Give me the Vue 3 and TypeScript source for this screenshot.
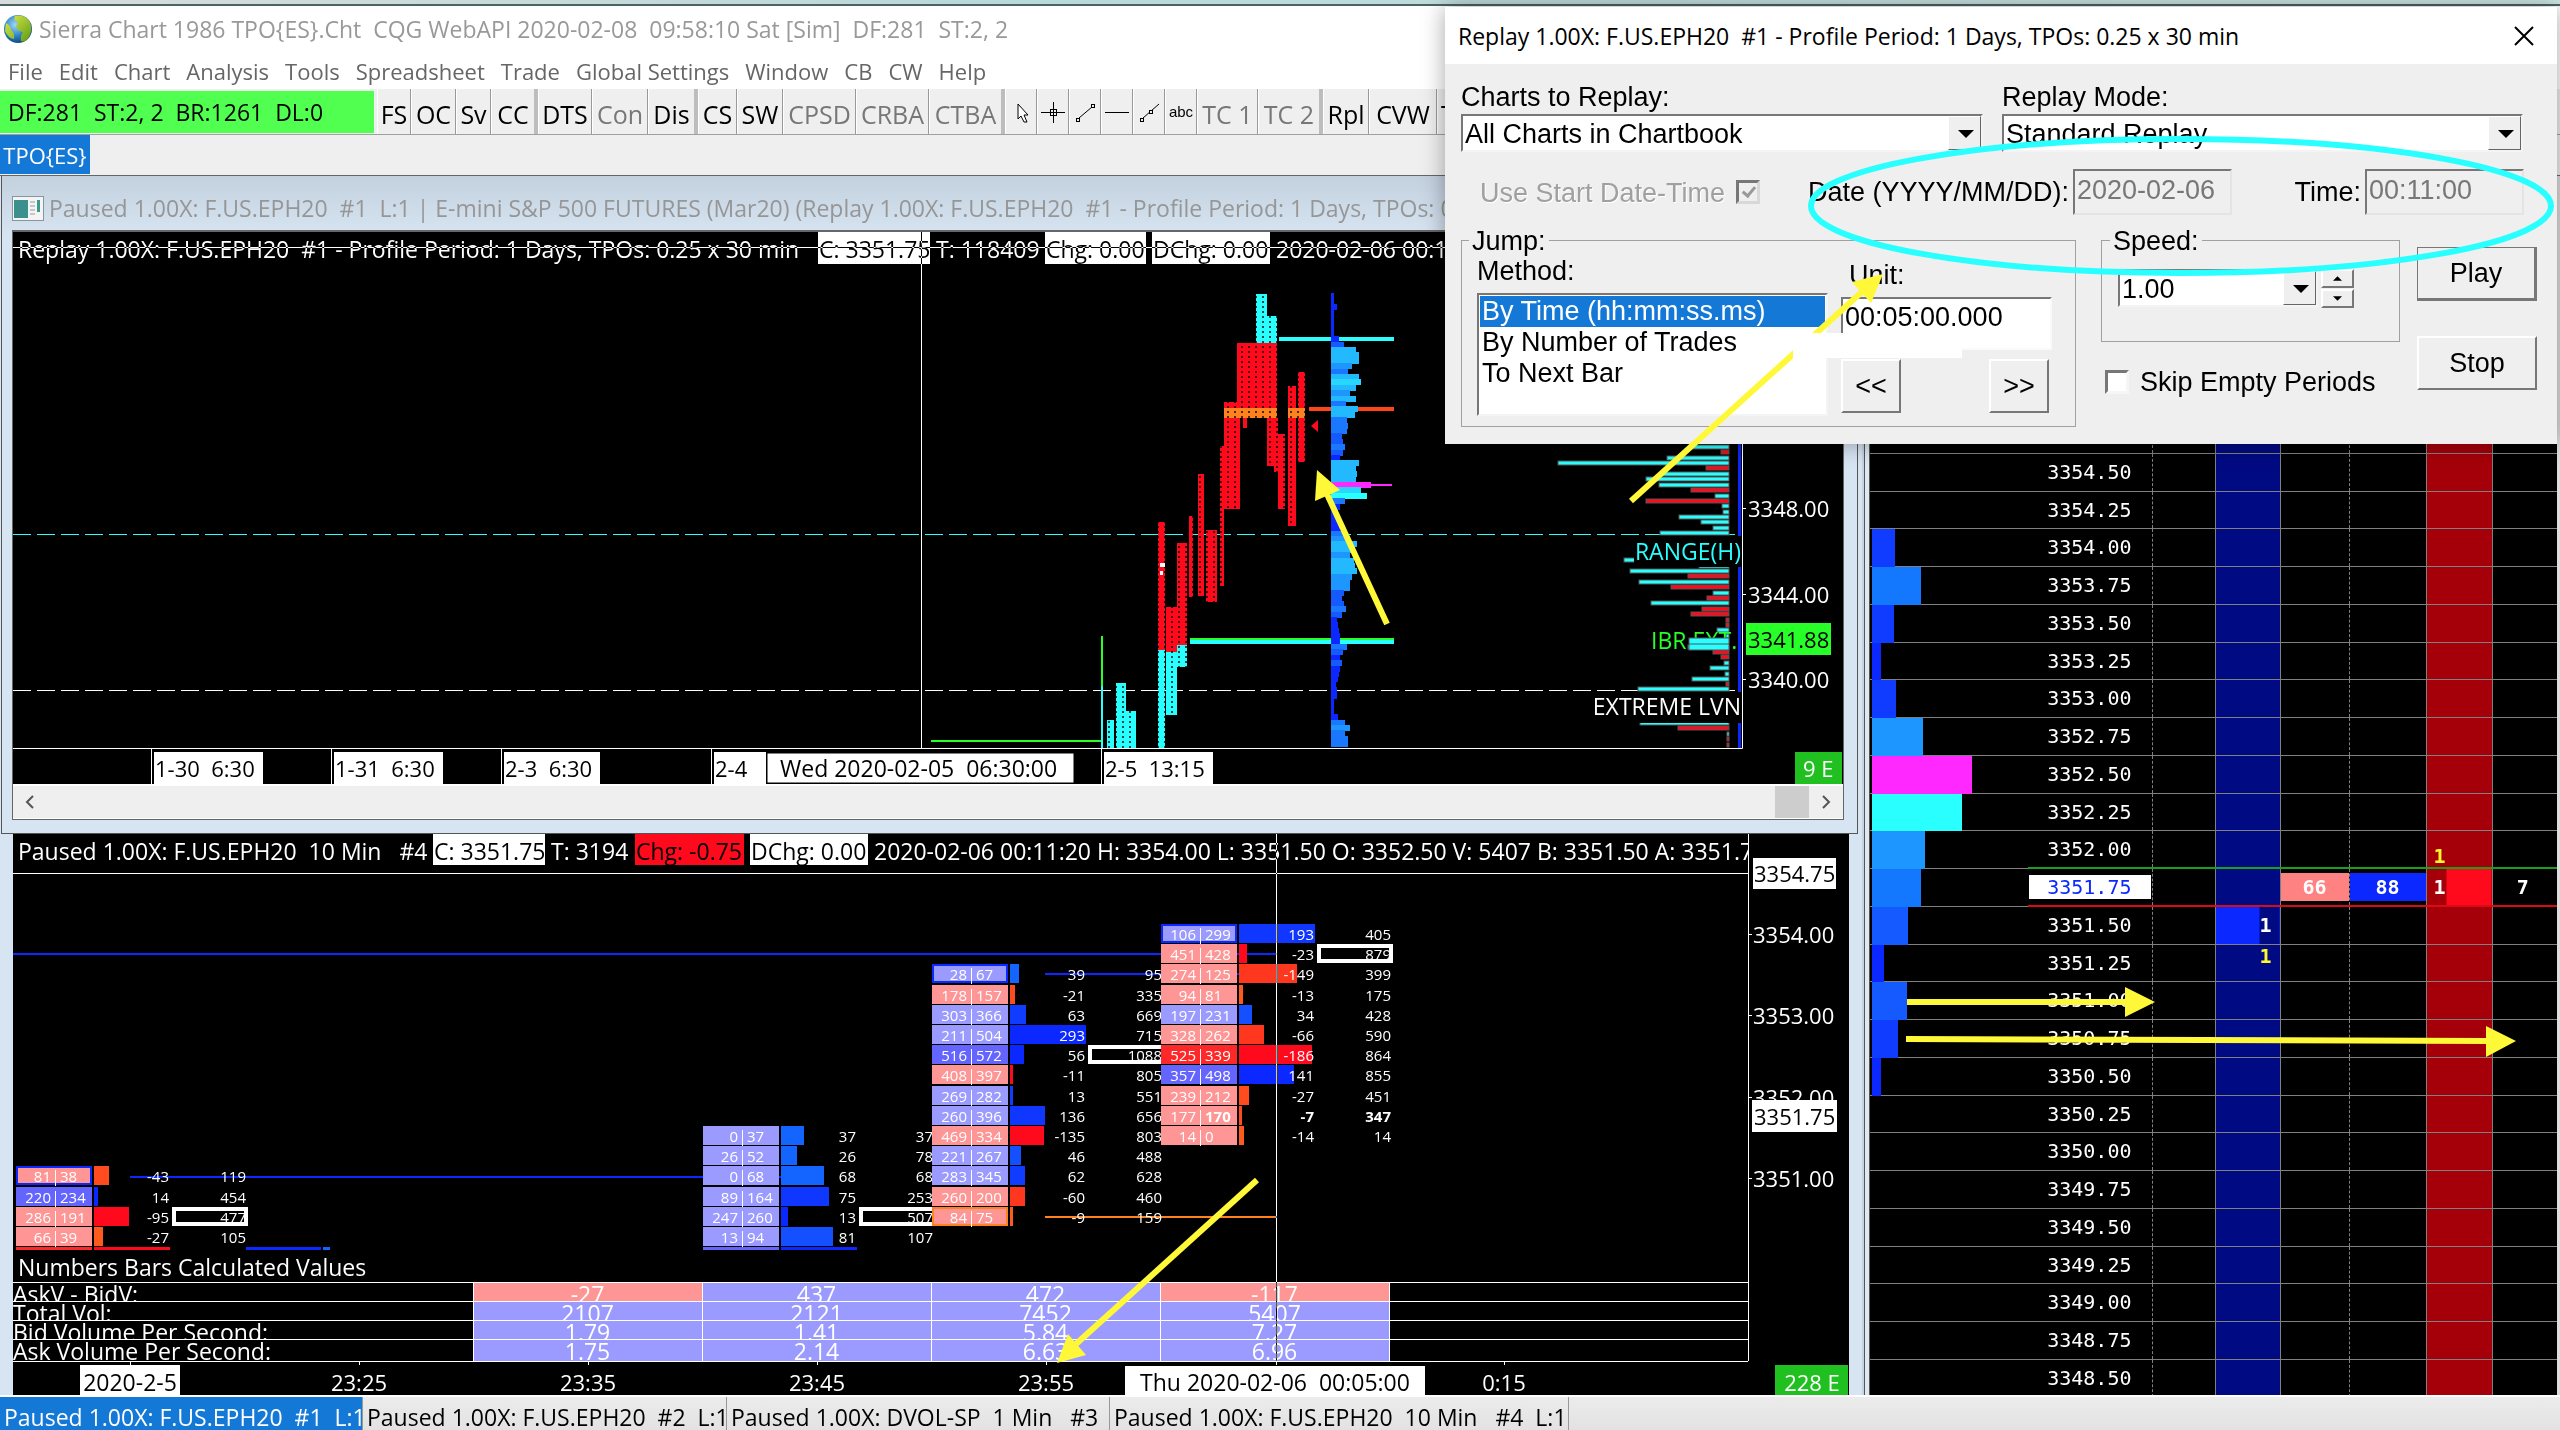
<script setup lang="ts">
interface Tool { label?: string; icon?: string; width: number; dim?: boolean; end?: boolean }
interface Cell { bid: number; ask: number; tone: string; bar: number; fill: string; delta: number; vol: number; edge?: string; poc?: boolean; bold?: boolean }
interface Bar { x: number; row: number; cells: Cell[] }

const appTitle = 'Sierra Chart 1986 TPO{ES}.Cht  CQG WebAPI 2020-02-08  09:58:10 Sat [Sim]  DF:281  ST:2, 2'
const feedStatus = 'DF:281  ST:2, 2  BR:1261  DL:0'
const replayTitle = 'Replay 1.00X: F.US.EPH20  #1 - Profile Period: 1 Days, TPOs: 0.25 x 30 min'
const windowTitle = `Paused 1.00X: F.US.EPH20  #1  L:1 | E-mini S&P 500 FUTURES (Mar20) (${replayTitle})`
const numbersTitle = 'Paused 1.00X: F.US.EPH20  10 Min   #4'
const upperCursor = 'Wed 2020-02-05  06:30:00'
const lowerCursor = 'Thu 2020-02-06  00:05:00'

const menus = ['File', 'Edit', 'Chart', 'Analysis', 'Tools', 'Spreadsheet', 'Trade', 'Global Settings', 'Window', 'CB', 'CW', 'Help']

const tools: Tool[] = [
  { label: 'FS', width: 34 }, { label: 'OC', width: 45 }, { label: 'Sv', width: 35 }, { label: 'CC', width: 47, end: true },
  { label: 'DTS', width: 54 }, { label: 'Con', width: 56, dim: true }, { label: 'Dis', width: 50, end: true },
  { label: 'CS', width: 39 }, { label: 'SW', width: 46 }, { label: 'CPSD', width: 73, dim: true },
  { label: 'CRBA', width: 73, dim: true }, { label: 'CTBA', width: 76, dim: true, end: true },
  { icon: 'pointer', width: 32 }, { icon: 'cross', width: 32 }, { icon: 'line', width: 32 }, { icon: 'horizontal', width: 32 },
  { icon: 'ray', width: 32 }, { icon: 'text', width: 32 }, { label: 'TC 1', width: 61, dim: true },
  { label: 'TC 2', width: 65, dim: true, end: true }, { label: 'Rpl', width: 46 }, { label: 'CVW', width: 68 }, { label: 'T', width: 22 },
]

const CYAN = '#2affff'
const RED = '#ff0a1c'

// Market profile letters: x, top, width, bottom, kind
const tpo: [number, number, number, number, string][] = [
  [1256, 294, 11, 347, 'c'], [1267, 316, 10, 347, 'c'], [1237, 343, 19, 416, 'r'], [1243, 416, 4, 428, 'r'],
  [1256, 343, 21, 416, 'r'], [1267, 418, 7, 466, 'r'], [1274, 418, 4, 472, 'r'], [1224, 402, 16, 509, 'r'],
  [1220, 446, 4, 586, 'r'], [1278, 434, 7, 509, 'r'], [1288, 386, 8, 526, 'r'], [1298, 372, 7, 462, 'r'],
  [1198, 474, 6, 596, 'r'], [1189, 516, 4, 597, 'r'], [1206, 530, 11, 602, 'r'], [1177, 543, 10, 645, 'r'],
  [1166, 607, 11, 655, 'r'], [1158, 522, 7, 650, 'r'], [1158, 650, 7, 748, 'c'], [1166, 652, 11, 715, 'c'],
  [1177, 645, 10, 667, 'c'], [1107, 720, 7, 748, 'c'], [1116, 683, 10, 748, 'c'], [1126, 711, 10, 748, 'c'],
  [1224, 408, 53, 418, 'o'], [1288, 408, 17, 418, 'o'],
]

const profile = [3, 3, 6, 3, 3, 3, 3, 3, 8, 13, 25, 28, 28, 21, 17, 28, 30, 25, 19, 25, 15, 27, 24, 16, 17, 16, 11, 12, 14, 12, 9, 28,
  25, 26, 25, 40, 30, 36, 14, 9, 6, 5, 8, 9, 14, 19, 26, 24, 19, 23, 24, 26, 21, 19, 19, 13, 11, 13, 15, 11, 6, 7, 8, 9, 9, 16, 12,
  9, 11, 9, 8, 7, 5, 6, 6, 3, 3, 3, 7, 14, 19, 14, 17, 17]

function profileFill(w: number): string {
  if (w >= 40) return '#ff28ff'
  if (w >= 36) return CYAN
  if (w >= 30) return '#28d7ff'
  if (w >= 23) return '#23b9ff'
  if (w >= 18) return '#1e96ff'
  if (w >= 14) return '#1978ff'
  if (w >= 10) return '#145aff'
  return '#0a28ff'
}

// Delta histogram on the right of the profile chart: y, left x, colour
const histogram: [number, number, string][] = [
  [447, 1693, 'c'], [452, 1721, 'r'], [458, 1667, 'c'], [463, 1558, 'c'], [468, 1706, 'r'], [474, 1660, 'c'], [479, 1646, 'c'],
  [485, 1659, 'c'], [490, 1691, 'r'], [496, 1715, 'c'], [501, 1646, 'r'], [506, 1722, 'c'], [512, 1723, 'c'], [517, 1679, 'c'],
  [522, 1701, 'c'], [528, 1713, 'c'], [533, 1660, 'c'], [560, 1624, 'c'], [566, 1699, 'c'], [571, 1630, 'c'], [576, 1688, 'r'],
  [582, 1639, 'c'], [587, 1671, 'r'], [593, 1713, 'c'], [598, 1707, 'r'], [603, 1651, 'c'], [609, 1702, 'r'], [614, 1691, 'r'],
  [620, 1726, 'r'], [625, 1726, 'r'], [630, 1717, 'c'], [636, 1726, 'c'], [641, 1690, 'c'], [647, 1688, 'c'], [652, 1713, 'r'],
  [657, 1721, 'r'], [663, 1724, 'c'], [668, 1710, 'c'], [674, 1725, 'c'], [679, 1692, 'c'], [684, 1726, 'r'], [689, 1638, 'c'],
  [723, 1640, 'c'], [728, 1678, 'r'], [734, 1727, 'c'], [739, 1727, 'r'], [745, 1727, 'r'],
]

const upperPrices: [number, string][] = [[509, '3348.00'], [595, '3344.00'], [680, '3340.00']]
const lowerPrices: [number, string][] = [[935, '3354.00'], [1016, '3353.00'], [1098, '3352.00'], [1179, '3351.00']]
const upperTimes: [number, number, string][] = [[151, 109, '1-30  6:30'], [331, 109, '1-31  6:30'], [501, 96, '2-3  6:30'], [711, 52, '2-4'], [1101, 109, '2-5  13:15']]
const lowerTimes: [number, string][] = [[359, '23:25'], [588, '23:35'], [817, '23:45'], [1046, '23:55'], [1504, '0:15']]

const P = '#ff9696', L = '#9b9bff', B = '#6464ff', R = '#ff2828'
const c = (bid: number, ask: number, tone: string, bar: number, fill: string, delta: number, vol: number, extra: Partial<Cell> = {}): Cell =>
  ({ bid, ask, tone, bar, fill, delta, vol, ...extra })

const bars: Bar[] = [
  { x: 16, row: 12, cells: [
    c(81, 38, P, 15, '#ff4b1e', -43, 119, { edge: '#0a28ff' }), c(220, 234, B, 4, '#0a28ff', 14, 454),
    c(286, 191, P, 35, RED, -95, 477, { poc: true }), c(66, 39, P, 9, '#ff5a1e', -27, 105)] },
  { x: 703, row: 10, cells: [
    c(0, 37, L, 23, '#1464ff', 37, 37), c(26, 52, L, 16, '#1464ff', 26, 78), c(0, 68, L, 43, '#1464ff', 68, 68),
    c(89, 164, L, 48, '#0f37ff', 75, 253), c(247, 260, L, 7, '#0a28ff', 13, 507, { poc: true }), c(13, 94, L, 52, '#1450ff', 81, 107)] },
  { x: 932, row: 2, cells: [
    c(28, 67, L, 9, '#1464ff', 39, 95, { edge: '#0a28ff' }), c(178, 157, P, 5, '#ff4b1e', -21, 335), c(303, 366, L, 16, '#0f3cff', 63, 669),
    c(211, 504, L, 76, '#0a28ff', 293, 715), c(516, 572, B, 14, '#0a28ff', 56, 1088, { poc: true }), c(408, 397, P, 3, RED, -11, 805),
    c(269, 282, L, 3, '#0f3cff', 13, 551), c(260, 396, L, 35, '#0f37ff', 136, 656), c(469, 334, P, 34, RED, -135, 803),
    c(221, 267, L, 11, '#1450ff', 46, 488), c(283, 345, L, 15, '#0f3cff', 62, 628), c(260, 200, P, 15, '#ff371e', -60, 460),
    c(84, 75, P, 3, '#ff5a1e', -9, 159, { edge: '#ff821e' })] },
  { x: 1161, row: 0, cells: [
    c(106, 299, L, 76, '#0f37ff', 193, 405, { edge: '#0a28ff' }), c(451, 428, P, 8, RED, -23, 879, { poc: true }), c(274, 125, P, 58, '#ff371e', -149, 399),
    c(94, 81, P, 4, '#ff5a1e', -13, 175), c(197, 231, L, 13, '#1450ff', 34, 428), c(328, 262, P, 25, '#ff371e', -66, 590),
    c(525, 339, R, 73, RED, -186, 864), c(357, 498, B, 55, '#0a28ff', 141, 855), c(239, 212, P, 10, '#ff4b1e', -27, 451),
    c(177, 170, P, 3, '#ff4b1e', -7, 347, { bold: true }), c(14, 0, P, 5, '#ff5a1e', -14, 14)] },
]
const rowTop = (i: number): number => Math.round(924 + 20.2 * i)

const calcRows: [string, string[]][] = [
  ['AskV - BidV:', ['-27', '437', '472', '-117']],
  ['Total Vol:', ['2107', '2121', '7452', '5407']],
  ['Bid Volume Per Second:', ['1.79', '1.41', '5.84', '7.27']],
  ['Ask Volume Per Second:', ['1.75', '2.14', '6.63', '6.96']],
]

const depth: Record<string, [number, string]> = {
  '3354.00': [23, '#0f3cff'], '3353.75': [49, '#1478ff'], '3353.50': [22, '#0f3cff'], '3353.25': [9, '#0a28ff'],
  '3353.00': [24, '#0f3cff'], '3352.75': [51, '#1e96ff'], '3352.50': [100, '#ff28ff'], '3352.25': [90, CYAN],
  '3352.00': [53, '#1e96ff'], '3351.75': [49, '#1478ff'], '3351.50': [36, '#145aff'], '3351.25': [12, '#0a28ff'],
  '3351.00': [35, '#145aff'], '3350.75': [26, '#0f3cff'], '3350.50': [9, '#0a28ff'],
}
const ladder = Array.from({ length: 25 }, (_, i) => (3354.5 - i * 0.25).toFixed(2))

const sheets = [
  { text: 'Paused 1.00X: F.US.EPH20  #1  L:1', width: 363 },
  { text: 'Paused 1.00X: F.US.EPH20  #2  L:1', width: 364 },
  { text: 'Paused 1.00X: DVOL-SP  1 Min   #3', width: 383 },
  { text: 'Paused 1.00X: F.US.EPH20  10 Min   #4  L:1', width: 459 },
]

// Marker arrows: shaft start, shaft end, head polygon
const arrows = [
  { line: [1631, 501, 1864, 290], head: '1883,274 1852,282 1871,303' },
  { line: [1387, 624, 1327, 494], head: '1317,470 1315,501 1340,490' },
  { line: [1257, 1180, 1076, 1344], head: '1057,1363 1068,1334 1086,1355' },
  { line: [1905, 1002, 2127, 1002], head: '2155,1002 2125,987 2125,1017' },
  { line: [1906, 1039, 2488, 1041], head: '2516,1041 2486,1026 2486,1057' },
]
</script>

<template>
  <div class="app">
    <div class="strip"></div>
    <header class="titlebar">
      <svg class="globe" viewBox="0 0 30 30">
        <defs>
          <radialGradient id="sea" cx="0.4" cy="0.35" r="0.7"><stop offset="0" stop-color="#9fd8f5" /><stop offset="0.6" stop-color="#2a7fc4" /><stop offset="1" stop-color="#0d3f7c" /></radialGradient>
          <linearGradient id="land" x1="0" y1="0" x2="1" y2="1"><stop offset="0" stop-color="#e2ec4c" /><stop offset="1" stop-color="#5c9c12" /></linearGradient>
        </defs>
        <circle cx="15" cy="15" r="14" fill="url(#sea)" />
        <path d="M12 2 Q22 0 27 8 Q30 16 26 23 Q22 29 18 27 Q17 22 20 18 Q14 17 13 12 Q17 9 13 7 Q10 6 12 2Z M3 9 Q8 12 8 16 Q12 19 11 25 Q5 24 2 17Z" fill="url(#land)" />
      </svg>
      <span>{{ appTitle }}</span>
    </header>
    <nav class="menu"><a v-for="m in menus" :key="m" href="#">{{ m }}</a></nav>
    <div class="toolbar">
      <div class="status">{{ feedStatus }}</div>
      <button v-for="(t, i) in tools" :key="i" type="button" :class="{ dim: t.dim, end: t.end }" :style="{ width: t.width + 'px' }">
        <template v-if="t.label">{{ t.label }}</template>
        <span v-else-if="t.icon === 'text'" class="abc">abc</span>
        <svg v-else viewBox="0 0 32 32" fill="none" stroke="#000" shape-rendering="crispEdges">
          <path v-if="t.icon === 'pointer'" d="M13 7 V22 L16 19 L19 25 H22 L19 18 H23 Z" fill="#fff" shape-rendering="auto" />
          <path v-if="t.icon === 'cross'" d="M4 15.5 H28 M16.5 5 V26 M13.5 12.5 H19.5 V18.5 H13.5 Z" />
          <path v-if="t.icon === 'line'" d="M10 21 L23 10" shape-rendering="auto" />
          <path v-if="t.icon === 'line'" d="M7.5 21.5 H10.5 V24.5 H7.5 Z M22.5 7.5 H25.5 V10.5 H22.5 Z" />
          <path v-if="t.icon === 'horizontal'" d="M4 15.5 H28" />
          <path v-if="t.icon === 'ray'" d="M10 21 L26 7" shape-rendering="auto" />
          <path v-if="t.icon === 'ray'" d="M7.5 21.5 H10.5 V24.5 H7.5 Z M16.5 13.5 H19.5 V16.5 H16.5 Z" fill="#efefef" />
        </svg>
      </button>
    </div>
    <div class="books"><button type="button">TPO{ES}</button></div>

    <main class="workspace">
      <div class="charts">
        <section class="window">
          <h2 class="caption">
            <svg viewBox="0 0 32 25"><rect x="0.5" y="0.5" width="31" height="24" fill="#f4f4f4" stroke="#8a949c" /><rect x="2" y="4" width="14" height="18" fill="#3b8f8c" /><path d="M18 6 H23 M18 10 H23 M18 14 H23 M18 18 H23" stroke="#999" /><rect x="25" y="4" width="3" height="12" fill="#3a9a90" /></svg>
            <span>{{ windowTitle }}</span>
          </h2>
          <div class="client">
            <div class="readout upper">
              <span class="name-upper">{{ replayTitle }}</span>
              <span class="box last">C: 3351.75</span><span class="trades-upper">T: 118409</span>
              <span class="box chg-upper">Chg: 0.00</span><span class="box dchg">DChg: 0.00</span>
              <span>2020-02-06 00:11:20</span>
            </div>
            <svg class="plot" viewBox="13 264 1830 520">
              <defs>
                <pattern v-for="k in [['c', CYAN], ['r', RED], ['o', '#ff821e']]" :id="'tpo-' + k[0]" :key="k[0]" width="7" height="5" patternUnits="userSpaceOnUse">
                  <rect width="7" height="5" :fill="k[1]" /><rect x="2" y="1" width="2" height="2" fill="#000" opacity="0.7" />
                </pattern>
              </defs>
              <path d="M13 534.5 H1741" :stroke="CYAN" stroke-dasharray="18 6" />
              <path d="M13 690.5 H1741" stroke="#fff" stroke-dasharray="18 6" />
              <rect v-for="(t, i) in tpo" :key="'t' + i" :x="t[0]" :y="t[1]" :width="t[2]" :height="t[3] - t[1]" :fill="`url(#tpo-${t[4]})`" />
              <rect x="1160" y="563" width="5" height="4" fill="#fff" /><rect x="1160" y="571" width="3" height="4" fill="#fff" />
              <path d="M1102 636 V686 M931 741 H1101" stroke="#28ff28" stroke-width="2" />
              <path d="M1102 686 V748" :stroke="CYAN" stroke-width="2" />
              <path d="M1279 339 H1394 M1190 642 H1394" :stroke="CYAN" stroke-width="4" />
              <path d="M1190 639 H1394" stroke="#28ff28" stroke-width="2" />
              <path d="M1309 409 H1394" stroke="#ff4619" stroke-width="4" />
              <path d="M1311 426 L1318 420 V432 Z" :fill="RED" />
              <rect v-for="(w, i) in profile" :key="'p' + i" x="1331" :y="Math.round(293 + i * 5.4)" :width="w" height="6" :fill="profileFill(w)" />
              <path d="M1371 485 H1392" stroke="#ff28ff" stroke-width="2" />
              <g stroke="#555">
                <rect v-for="(h, i) in histogram" :key="'h' + i" :x="h[1]" :y="h[0] - 2" :width="1729 - h[1]" height="4" :fill="h[2] === 'c' ? CYAN : RED" />
              </g>
              <path d="M1739.5 438 V748" stroke="#0a28ff" stroke-width="3" />
              <rect x="1634" y="536" width="108" height="31" fill="#000" /><rect x="1590" y="692" width="152" height="31" fill="#000" />
              <g font-size="23">
                <text x="1741" y="560" text-anchor="end" :fill="CYAN">RANGE(H)</text>
                <text x="1651" y="649" fill="#28ff28">IBR EXT.</text>
                <text x="1741" y="715" text-anchor="end" fill="#fff">EXTREME LVN</text>
              </g>
              <rect x="1689" y="638" width="40" height="12" :fill="CYAN" stroke="#555" /><path d="M1689 644 H1729" stroke="#555" />
              <path d="M921.5 264 V748" stroke="#fff" />
              <path d="M13 748.5 H1742.5 V264" fill="none" stroke="#fff" />
              <g font-size="22" fill="#fff">
                <g v-for="p in upperPrices" :key="p[1]"><path :d="`M1743 ${p[0] - 1}.5 h3`" stroke="#fff" /><text x="1748" :y="p[0] + 8">{{ p[1] }}</text></g>
              </g>
              <rect x="1746" y="623" width="85" height="32" fill="#28ff28" /><text x="1748" y="648" font-size="22">3341.88</text>
              <g v-for="t in upperTimes" :key="t[2]" font-size="22">
                <path :d="`M${t[0]}.5 748 V784`" stroke="#fff" /><rect :x="t[0] + 3" y="752" :width="t[1]" height="32" fill="#fff" />
                <text :x="t[0] + 4" y="777">{{ t[2] }}</text>
              </g>
              <rect x="767" y="753" width="307" height="30" fill="#fff" stroke="#000" />
              <text x="780" y="777" font-size="23">{{ upperCursor }}</text>
              <rect x="1795" y="752" width="47" height="32" fill="#20c020" /><text x="1803" y="777" font-size="22" fill="#fff">9 E</text>
            </svg>
            <div class="scroller">
              <button type="button" aria-label="Scroll left"><svg viewBox="0 0 12 14"><path d="M9 1 L3 7 L9 13" fill="none" stroke="#555" stroke-width="2" /></svg></button>
              <div class="thumb"></div>
              <button type="button" aria-label="Scroll right"><svg viewBox="0 0 12 14"><path d="M3 1 L9 7 L3 13" fill="none" stroke="#555" stroke-width="2" /></svg></button>
            </div>
          </div>
        </section>

        <section class="numbers">
          <div class="main">
            <div class="readout">
              <span class="name-lower">{{ numbersTitle }}</span>
              <span class="box last">C: 3351.75</span><span class="trades-lower">T: 3194</span>
              <span class="box down">Chg: -0.75</span><span class="box dchg">DChg: 0.00</span>
              <span>2020-02-06 00:11:20 H: 3354.00 L: 3351.50 O: 3352.50 V: 5407 B: 3351.50 A: 3351.7</span>
            </div>
            <svg class="plot" viewBox="13 865 1735 417">
              <path d="M13 873.5 H1748" stroke="#fff" />
              <path d="M13 954 H1277 M1045 974 H1240 M130 1177 H783" stroke="#0a28ff" stroke-width="2" />
              <path d="M1045 1217 H1277" stroke="#ff821e" stroke-width="2" />
              <g v-for="b in bars" :key="b.x" font-size="15" fill="#fff">
                <g v-for="(k, i) in b.cells" :key="i">
                  <rect :x="b.x" :y="rowTop(b.row + i)" width="76" height="19" :fill="k.tone" />
                  <rect v-if="k.edge" :x="b.x + 1" :y="rowTop(b.row + i) + 1" width="74" height="17" fill="none" :stroke="k.edge" stroke-width="2" />
                  <rect :x="b.x + 78" :y="rowTop(b.row + i)" :width="k.bar" height="19" :fill="k.fill" />
                  <rect v-if="k.poc" :x="b.x + 158" :y="rowTop(b.row + i) + 2" :width="b.x === 1161 || b.x === 16 ? 72 : 76" height="15" fill="none" stroke="#fff" stroke-width="4" />
                  <path :d="`M${b.x + 39}.5 ${rowTop(b.row + i) + 4} v16`" stroke="#fff" />
                  <text :x="b.x + 35" :y="rowTop(b.row + i) + 16" text-anchor="end">{{ k.bid }}</text>
                  <text :x="b.x + 44" :y="rowTop(b.row + i) + 16" :font-weight="k.bold ? 700 : 400">{{ k.ask }}</text>
                  <text :x="b.x + 153" :y="rowTop(b.row + i) + 16" text-anchor="end" :font-weight="k.bold ? 700 : 400">{{ k.delta }}</text>
                  <text :x="b.x + 230" :y="rowTop(b.row + i) + 16" text-anchor="end" :font-weight="k.bold ? 700 : 400">{{ k.vol }}</text>
                </g>
              </g>
              <rect x="16" y="1247" width="76" height="3" fill="#ff2828" /><rect x="94" y="1247" width="76" height="3" :fill="RED" />
              <rect x="246" y="1247" width="75" height="3" fill="#0a28ff" /><rect x="323" y="1247" width="7" height="3" fill="#1464ff" />
              <rect x="703" y="1247" width="76" height="3" fill="#6464ff" /><rect x="781" y="1247" width="76" height="3" fill="#0a28ff" />
              <text x="18" y="1276" font-size="23" fill="#fff">Numbers Bars Calculated Values</text>
            </svg>
            <table class="calc">
              <colgroup><col class="lead" /><col v-for="n in 4" :key="n" class="value" /><col /></colgroup>
              <tr v-for="row in calcRows" :key="row[0]">
                <th scope="row"><div>{{ row[0] }}</div></th>
                <td v-for="(v, i) in row[1]" :key="i" :class="{ minus: v.startsWith('-') }"><div>{{ v }}</div></td>
                <td class="blank"></td>
              </tr>
            </table>
            <div class="crosshair"></div>
          </div>
          <svg class="plot" viewBox="1748 834 101 527">
            <path d="M1748.5 834 V1361" stroke="#fff" />
            <g v-for="p in lowerPrices" :key="p[1]" font-size="22" fill="#fff"><path :d="`M1749 ${p[0] - 1}.5 h3`" stroke="#fff" /><text x="1753" :y="p[0] + 8">{{ p[1] }}</text></g>
            <rect x="1753" y="858" width="83" height="31" fill="#fff" /><text x="1754" y="882" font-size="22">3354.75</text>
            <rect x="1752" y="1100" width="85" height="32" fill="#fff" /><text x="1754" y="1125" font-size="22">3351.75</text>
          </svg>
          <svg class="plot axis" viewBox="13 1361 1836 34">
            <path d="M13 1361.5 H1748" stroke="#fff" />
            <path d="M130.5 1361 v4 M1276.5 1361 v4" stroke="#fff" />
            <g v-for="t in lowerTimes" :key="t[1]" font-size="22" fill="#fff"><path :d="`M${t[0]}.5 1361 v4`" stroke="#fff" /><text :x="t[0]" y="1391" text-anchor="middle">{{ t[1] }}</text></g>
            <rect x="80" y="1365" width="100" height="30" fill="#fff" /><text x="130" y="1391" font-size="23" text-anchor="middle">2020-2-5</text>
            <rect x="1125" y="1366" width="300" height="29" fill="#fff" /><text x="1275" y="1391" font-size="23" text-anchor="middle">{{ lowerCursor }}</text>
            <rect x="1775" y="1365" width="73" height="30" fill="#20c020" /><text x="1812" y="1391" font-size="22" fill="#fff" text-anchor="middle">228 E</text>
          </svg>
        </section>
      </div>

      <div class="dom">
        <table>
          <colgroup><col class="c1" /><col class="c2" /><col class="c3" /><col class="c4" /><col class="c5" /><col class="c6" /><col class="c7" /><col /></colgroup>
          <tr><td></td><td class="price"></td><td></td><td class="bids"></td><td></td><td class="dash"></td><td class="asks"></td><td></td></tr>
          <tr v-for="p in ladder" :key="p" :class="{ current: p === '3351.75' }">
            <td class="depth"><i v-if="depth[p]" :style="{ width: depth[p][0] + 'px', background: depth[p][1] }"></i></td>
            <td class="price"><span>{{ p }}</span></td>
            <td></td>
            <td class="bids" :class="{ filled: p === '3351.50' }"><b v-if="p === '3351.50'">1</b><b v-if="p === '3351.25'" class="mine top">1</b></td>
            <td><b v-if="p === '3351.75'" class="sold">66</b></td>
            <td class="dash"><b v-if="p === '3351.75'" class="bought">88</b></td>
            <td class="asks" :class="{ filled: p === '3351.75' }"><b v-if="p === '3351.75'">1</b><b v-if="p === '3352.00'" class="mine low">1</b></td>
            <td class="total"><b v-if="p === '3351.75'">7</b></td>
          </tr>
        </table>
      </div>
    </main>

    <footer class="sheets">
      <button v-for="(s, i) in sheets" :key="s.text" type="button" :class="{ active: i === 0 }" :style="{ width: s.width + 'px' }">{{ s.text }}</button>
    </footer>

    <form class="dialog" @submit.prevent>
      <div class="dialog-title">
        <span>{{ replayTitle }}</span>
        <button type="button" aria-label="Close"><svg viewBox="0 0 20 20"><path d="M1 1 L19 19 M19 1 L1 19" stroke="#000" stroke-width="2" /></svg></button>
      </div>
      <div class="dialog-body">
        <div class="pair">
          <label>Charts to Replay:<span class="combo"><select><option>All Charts in Chartbook</option></select></span></label>
          <label>Replay Mode:<span class="combo"><select><option>Standard Replay</option></select></span></label>
        </div>
        <div class="start">
          <label for="use-start" class="off">Use Start Date-Time</label>
          <input id="use-start" type="checkbox" checked disabled />
          <label for="date">Date (YYYY/MM/DD):</label>
          <input id="date" class="field" value="2020-02-06" disabled />
          <label for="time">Time:</label>
          <input id="time" class="field" value="00:11:00" disabled />
        </div>
        <div class="groups">
          <fieldset class="jump">
            <legend>Jump:</legend>
            <div class="method">
              <label for="method">Method:</label>
              <select id="method" size="4">
                <option selected>By Time (hh:mm:ss.ms)</option><option>By Number of Trades</option><option>To Next Bar</option>
              </select>
            </div>
            <div class="unit">
              <label for="unit">Unit:</label>
              <input id="unit" class="field" value="00:05:00.000" />
              <div class="steps"><button type="button" class="push">&lt;&lt;</button><button type="button" class="push">&gt;&gt;</button></div>
            </div>
          </fieldset>
          <div class="middle">
            <fieldset class="speed">
              <legend>Speed:</legend>
              <span class="combo"><select aria-label="Speed"><option>1.00</option></select></span>
              <span class="spin">
                <button type="button" aria-label="Faster"><svg viewBox="0 0 8 4"><path d="M0 4 L4 0 L8 4Z" /></svg></button>
                <button type="button" aria-label="Slower"><svg viewBox="0 0 8 4"><path d="M0 0 L4 4 L8 0Z" /></svg></button>
              </span>
            </fieldset>
            <label class="skip"><input type="checkbox" />Skip Empty Periods</label>
          </div>
          <div class="actions"><button type="button" class="push primary">Play</button><button type="button" class="push">Stop</button></div>
        </div>
      </div>
    </form>

    <svg class="marks" viewBox="0 0 2560 1430">
      <ellipse cx="2181" cy="206" rx="370" ry="67" fill="none" stroke="#2affff" stroke-width="6" />
      <g v-for="a in arrows" :key="a.head"><line :x1="a.line[0]" :y1="a.line[1]" :x2="a.line[2]" :y2="a.line[3]" stroke="#fff838" stroke-width="6" /><polygon :points="a.head" fill="#fff838" /></g>
      <rect x="1793" y="333" width="169" height="25" fill="#fff" />
    </svg>
  </div>
</template>

<style>
body { margin: 0; background: #000; }
</style>

<style scoped>
.app { position: relative; display: flex; flex-direction: column; min-height: 100vh; overflow: hidden; background: #efefef; font: 23px/30px "Open Sans", "Noto Sans", sans-serif; color: #000; }
.app * { box-sizing: border-box; }
button, input, select { font: inherit; color: inherit; margin: 0; padding: 0; border: 0; border-radius: 0; background: none; }
svg { display: block; }
svg text { white-space: pre; }
.strip { height: 6px; background: linear-gradient(90deg, #d8dcdc, #b9d8d8 40%, #cfe6e4); border-bottom: 2px solid #4a6464; }
.titlebar { display: flex; align-items: center; gap: 6px; height: 48px; padding: 0 0 2px 3px; background: #fff; color: #999; white-space: pre; }
.globe { width: 30px; height: 30px; }
.menu { display: flex; gap: 16px; height: 35px; padding-left: 8px; background: #fff; font-size: 22px; line-height: 34px; white-space: nowrap; }
.menu a { color: #666; text-decoration: none; }
.toolbar { display: flex; height: 46px; border-bottom: 1px solid #a0a0a0; overflow: hidden; }
.status { flex: none; width: 374px; height: 42px; margin: 2px 3px 0 0; padding-left: 8px; background: #50ff50; line-height: 42px; white-space: pre; }
.toolbar button { flex: none; border-right: 1px solid #999; border-left: 1px solid #fff; font-size: 25px; line-height: 50px; white-space: nowrap; display: flex; justify-content: center; }
.toolbar .dim { color: #777; }
.toolbar .end { border-right: 4px solid #bdbdbd; }
.toolbar svg { flex: none; width: 32px; height: 32px; margin-top: 8px; }
.abc { font: 15px/46px "Liberation Sans", sans-serif; }
.books { height: 41px; border-bottom: 1px solid #666; }
.books button { width: 90px; height: 39px; background: #1478d7; color: #fff; font-size: 22px; line-height: 40px; }
.workspace { display: grid; grid-template-columns: minmax(0, 1fr) 690px; flex: 1; }
.charts { padding-left: 1px; background: linear-gradient(to left, #555 0 1px, #dfe9f3 1px 5px, #555 5px 6px, #c5d3e2 6px 8px, #d7e4f2 8px); }
.window { margin-right: 12px; border: 1px solid #555; border-top: 0; background: linear-gradient(#c3d0de, #d7e4f2 60px); padding: 0 13px 13px 10px; }
.caption { display: flex; align-items: center; gap: 5px; height: 54px; padding-top: 10px; margin: 0; font-size: 23px; font-weight: 400; color: #969696; white-space: pre; overflow: hidden; }
.caption svg { flex: none; width: 32px; height: 25px; }
.client { border: 1px solid #666; border-top-width: 2px; background: #000; }
.readout { position: relative; display: flex; height: 31px; padding-left: 5px; color: #fff; line-height: 34px; white-space: pre; overflow: hidden; }
.readout span { flex: none; }
.upper { height: 32px; }
.upper::after { content: ""; position: absolute; left: 0; top: 15px; width: 1730px; height: 1px; background: #fff; mix-blend-mode: difference; }
.upper::before { content: ""; position: absolute; left: 908px; top: 0; width: 1px; height: 32px; background: #fff; mix-blend-mode: difference; }
.box { background: #fff; color: #000; padding-left: 1px; margin-right: 6px; overflow: hidden; }
.name-upper { width: 800px; }
.name-lower { width: 415px; }
.last { width: 112px; }
.trades-upper { width: 109px; }
.trades-lower { width: 84px; }
.chg-upper { width: 101px; }
.dchg { width: 118px; }
.down { width: 109px; background: #ff0a1c; }
.plot { width: 100%; height: auto; }
.scroller { display: flex; align-items: center; height: 35px; border-top: 2px solid #fff; border-bottom: 1px solid #fff; background: #efefef; }
.scroller button { display: grid; place-items: center; width: 34px; height: 32px; }
.scroller svg { width: 12px; height: 14px; }
.thumb { width: 34px; height: 32px; margin-left: auto; background: #cdcdcd; }
.numbers { display: grid; grid-template-columns: minmax(0, 1fr) 101px; margin: 0 21px 0 12px; background: #000; }
.numbers .axis { grid-column: 1 / -1; }
.main { position: relative; }
.crosshair { position: absolute; top: 0; bottom: 0; left: 1263px; width: 1px; background: #fff; mix-blend-mode: difference; }
.calc { width: 100%; table-layout: fixed; border-collapse: collapse; color: #fff; line-height: 22px; }
.calc .lead { width: 460px; }
.calc .value { width: 229px; }
.calc tr { border-top: 1px solid #fff; }
.calc th, .calc td { padding: 0; font-weight: 400; }
.calc th { text-align: left; }
.calc td { border-right: 1px solid #fff; border-left: 1px solid #fff; background: #9b9bff; text-align: center; }
.calc td.minus { background: #ff9696; }
.calc td.blank { border-right: 0; background: #000; }
.calc div { height: 18px; overflow: hidden; }
.calc tr:last-child div { height: 21px; }
.dom { padding-top: 239px; background: #000; overflow: hidden; border-right: 3px solid #ddd; height: 1219px; }
.dom table { width: 100%; table-layout: fixed; border-collapse: collapse; font: 20px/20px "DejaVu Sans Mono", monospace; color: #fff; }
.c1 { width: 158px; } .c2 { width: 124px; } .c3 { width: 63px; } .c4 { width: 65px; } .c5 { width: 69px; } .c6 { width: 77px; } .c7 { width: 66px; }
.dom tr { height: 38px; }
.dom tr:nth-child(4n) { height: 37px; }
.dom td { position: relative; padding: 0; border-bottom: 1px solid #808080; text-align: center; }
.dom .depth i { position: absolute; left: 2px; top: 0; bottom: -1px; z-index: 1; }
.dom .price { border-right: 1px dashed #808080; }
.dom .price span { display: block; margin: 0 1px; padding: 2px 19px 2px 0; text-align: right; }
.dom .bids { background: #000a82; border-left: 1px solid #808080; border-right: 1px solid #808080; text-align: right; padding-right: 8px; }
.dom .bids.filled { background: linear-gradient(90deg, #0a28ff 44px, #000a82 44px); }
.dom .asks { background: #a5000a; border-left: 1px solid #808080; border-right: 1px solid #808080; text-align: left; padding-left: 7px; }
.dom .asks.filled { background: linear-gradient(90deg, #a5000a 20px, #ff0a1c 20px); }
.dom .dash { border-left: 1px dashed #808080; }
.mine { color: #fff82a; }
.low { position: relative; top: 7px; }
.top { position: relative; top: -7px; }
.sold, .bought { display: block; height: 28px; line-height: 28px; background: #ff8282; }
.bought { background: #0a28ff; }
.dom .current td:not(.depth) { border-top: 2px solid #19a019; border-bottom: 2px solid #dc0a14; }
.dom .current .price span { background: #fff; color: #0a28ff; }
.dom .total { padding-right: 4px; }
.sheets { display: flex; height: 35px; border-top: 2px solid #fff; background: linear-gradient(#ececec, #e2e2e2); white-space: pre; }
.sheets button { border-right: 1px solid #999; padding-left: 4px; text-align: left; white-space: pre; line-height: 40px; overflow: hidden; }
.sheets .active { background: #1478d7; color: #fff; }

.dialog { position: absolute; top: 7px; right: 3px; width: 1112px; background: #efefef; box-shadow: 0 0 22px rgba(0, 0, 0, 0.35); font: 27px/30px "Liberation Sans", Arial, sans-serif; }
.dialog-title { display: flex; justify-content: space-between; align-items: center; height: 57px; padding: 0 23px 0 13px; background: #fff; font: 23px/30px "Open Sans", "Noto Sans", sans-serif; white-space: pre; }
.dialog-title svg { width: 20px; height: 20px; }
.dialog-body { height: 380px; padding: 18px 0 0 16px; }
.pair { display: grid; grid-template-columns: 522px 521px; gap: 19px; }
.combo { position: relative; display: block; height: 38px; margin-top: 2px; }
.combo select { width: 100%; height: 100%; appearance: none; padding: 2px 0 0 2px; background: #fff; border: 2px solid; border-color: #777 #f4f4f4 #f4f4f4 #777; line-height: 30px; }
.combo::after { content: ""; position: absolute; right: 2px; top: 2px; bottom: 2px; width: 31px; background: #efefef; border: 1px solid; border-color: #fff #666 #666 #fff; pointer-events: none; }
.combo::before { content: ""; position: absolute; z-index: 1; right: 9px; top: 16px; border: 8px solid transparent; border-top-color: #000; border-bottom: 0; pointer-events: none; }
.start { display: grid; grid-template-columns: 252px 24px 305px 159px 125px 159px; column-gap: 4px; align-items: center; margin-top: 17px; padding-left: 19px; white-space: nowrap; }
.start label { text-align: right; }
.start .off { text-align: left; color: #a0a0a0; text-shadow: 1px 1px #fff; padding-top: 2px; }
.field { width: 100%; height: 46px; padding: 0 0 4px 2px; border: 2px solid; border-color: #777 #fafafa #fafafa #777; background: #fff; }
.field:disabled { background: #efefef; color: #777; border-right-color: #e4e4e4; border-bottom-color: #e4e4e4; }
input[type="checkbox"] { appearance: none; width: 24px; height: 24px; border: 3px solid; border-color: #777 #f6f6f6 #f6f6f6 #777; background: #fff; }
input[type="checkbox"]:disabled { background: #efefef; border-right-color: #d8d8d8; border-bottom-color: #d8d8d8; position: relative; }
input[type="checkbox"]:disabled::after { content: ""; position: absolute; left: 6px; top: 1px; width: 5px; height: 10px; border: solid #999; border-width: 0 3px 3px 0; transform: rotate(40deg); }
.groups { display: flex; align-items: flex-start; margin-top: 9px; }
fieldset { margin: 0; padding: 0; border: 1px solid #a0a0a0; min-width: 0; }
legend { margin-left: -8px; padding: 0 3px; height: 32px; line-height: 34px; }
.jump { width: 615px; height: 203px; display: flex; gap: 13px; padding-left: 15px; }
.method { width: 351px; }
.method label, .unit label { display: block; }
.method select { width: 351px; height: 123px; margin-top: 7px; padding: 1px; border: 2px solid; border-color: #777 #f4f4f4 #f4f4f4 #777; background: #fff; overflow: hidden; scrollbar-width: none; }
.method option { height: 31px; min-height: 31px; padding: 0 0 0 2px; line-height: 31px; }
.method option:checked { background: #1478d7 linear-gradient(#1478d7, #1478d7); color: #fff; }
.unit { width: 211px; padding-top: 4px; }
.unit label { padding-left: 8px; }
.unit .field { height: 53px; padding: 0 0 12px 2px; margin-top: 7px; }
.steps { display: flex; justify-content: space-between; padding-right: 3px; margin-top: 9px; }
.push { width: 60px; height: 54px; border: 2px solid; border-color: #fff #777 #777 #fff; background: #efefef; }
.middle { width: 299px; margin-left: 25px; }
.speed { height: 118px; display: flex; padding-left: 16px; }
.speed .combo { width: 200px; height: 38px; margin-top: 13px; }
.spin { display: grid; gap: 1px; margin: 13px 0 0 3px; height: 39px; }
.spin button { display: grid; place-items: center; width: 33px; border: 2px solid; border-color: #fff #777 #777 #fff; }
.spin svg { width: 9px; height: 5px; }
.skip { display: flex; align-items: center; gap: 11px; margin: 25px 0 0 4px; white-space: nowrap; }
.actions { display: grid; gap: 35px; margin: 23px 0 0 17px; }
.actions .push { width: 120px; }
.actions .primary { border-top: 1px solid #777; border-left: 1px solid #777; border-right-width: 3px; border-bottom-width: 3px; }
.marks { position: absolute; left: 0; top: 0; width: 100%; height: auto; pointer-events: none; }
</style>
